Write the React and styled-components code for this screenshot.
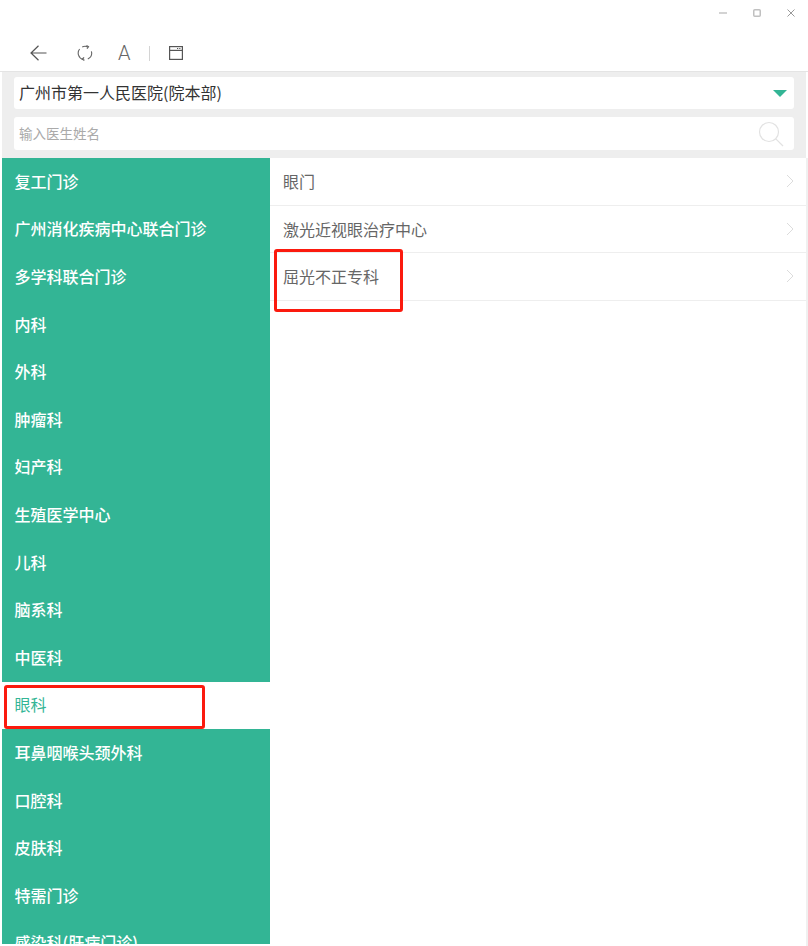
import React from 'react';
import styled, { createGlobalStyle } from 'styled-components';

const GlobalStyle = createGlobalStyle`
  html, body {
    margin: 0;
    padding: 0;
    background: #fff;
    font-family: "Noto Sans CJK SC", "Noto Sans", sans-serif;
  }
  * { box-sizing: border-box; }
`;

const Page = styled.div`
  width: 808px;
  height: 946px;
  overflow: hidden;
  position: relative;
  background: #fff;
`;

const TitleBar = styled.div`
  height: 72px;
  border-bottom: 1px solid #e4e4e4;
  display: flex;
  flex-direction: column;
`;

const WindowControls = styled.div`
  height: 26px;
  display: flex;
  justify-content: flex-end;
  align-items: center;
  gap: 26px;
  padding-right: 13px;
`;

const Toolbar = styled.div`
  display: flex;
  align-items: center;
  height: 28px;
  margin-top: 13px;
  padding-left: 30px;
`;

const ToolIcon = styled.svg`
  display: block;
  flex: none;
  margin-right: ${(p) => p.$gap}px;
`;

const ToolLetter = styled.span`
  font-family: "Roboto", sans-serif;
  font-weight: 300;
  font-size: 20px;
  line-height: 28px;
  color: #666;
  width: 13px;
  margin-right: 18px;
`;

const ToolDivider = styled.span`
  width: 1px;
  height: 15px;
  background: #d4d4d4;
  margin-right: 19px;
`;

const SearchPanel = styled.div`
  height: 86px;
  margin: 0 2px;
  background: #eee;
  padding: 5px 12px 0;
  display: flex;
  flex-direction: column;
  gap: 8px;
`;

const HospitalSelect = styled.div`
  height: 32px;
  background: #fff;
  border-radius: 3px;
  display: flex;
  align-items: center;
  justify-content: space-between;
  padding: 0 7px 2px 5px;
  font-size: 16px;
  color: #333;
`;

const Caret = styled.span`
  width: 0;
  height: 0;
  margin-top: 2px;
  border-left: 7px solid transparent;
  border-right: 7px solid transparent;
  border-top: 7px solid #33b595;
`;

const DoctorSearch = styled.div`
  height: 33px;
  background: #fff;
  border-radius: 3px;
  display: flex;
  align-items: center;
  justify-content: space-between;
  padding: 0 10px 0 5px;
  font-size: 13.5px;
  color: #aaa;
`;

const PlaceholderText = styled.span`
  margin-top: -2px;
`;

const Columns = styled.div`
  display: flex;
  margin: 0 2px;
  height: 786px;
  overflow: hidden;
`;

const Sidebar = styled.ul`
  width: 268px;
  margin: 0;
  padding: 0;
  list-style: none;
  flex: none;
`;

const SideItem = styled.li`
  height: 47.6px;
  padding: 0 0 2px 12.5px;
  display: flex;
  align-items: center;
  font-size: 16px;
  font-weight: ${(p) => (p.$active ? 400 : 500)};
  color: ${(p) => (p.$active ? '#33b595' : '#fff')};
  background: ${(p) => (p.$active ? '#fff' : '#33b595')};
`;

const SubList = styled.ul`
  flex: 1;
  margin: 0;
  padding: 0;
  list-style: none;
`;

const SubItem = styled.li`
  height: 47.6px;
  padding: 0 12px 0 13px;
  display: flex;
  align-items: center;
  justify-content: space-between;
  border-bottom: 1px solid #eee;
  font-size: 16px;
  color: #666;
`;

const EdgeLine = styled.div`
  position: absolute;
  top: 158px;
  right: 0;
  bottom: 0;
  width: 2px;
  background: #f0f0f0;
`;

// red annotation rectangles sit on top of the screenshot content
const Annotation = styled.div`
  position: absolute;
  left: ${(p) => p.$x}px;
  top: ${(p) => p.$y}px;
  width: ${(p) => p.$w}px;
  height: ${(p) => p.$h}px;
  border: 3px solid #fb1a0e;
  border-radius: 3px;
`;

const departments = [
  '复工门诊', '广州消化疾病中心联合门诊', '多学科联合门诊', '内科', '外科', '肿瘤科',
  '妇产科', '生殖医学中心', '儿科', '脑系科', '中医科', '眼科',
  '耳鼻咽喉头颈外科', '口腔科', '皮肤科', '特需门诊', '感染科(肝病门诊)',
];

const clinics = ['眼门', '激光近视眼治疗中心', '屈光不正专科'];

const Chevron = () => (
  <svg width="8" height="14" viewBox="0 0 8 14" fill="none" stroke="#dcdcdc" strokeWidth="1">
    <path d="M1 1l6 6-6 6" />
  </svg>
);

const App = () => (
  <Page>
    <GlobalStyle />
    <TitleBar>
      <WindowControls>
        <svg width="8" height="8" viewBox="0 0 8 8"><path d="M0 4h8" stroke="#c4c4c4" strokeWidth="1.5" /></svg>
        <svg width="8" height="8" viewBox="0 0 8 8"><rect x=".75" y=".75" width="6.5" height="6.5" rx="1" fill="none" stroke="#c0c0c0" strokeWidth="1.5" /></svg>
        <svg width="8" height="8" viewBox="0 0 8 8"><path d="M.5.5l7 7M7.5.5l-7 7" stroke="#999" strokeWidth="1" /></svg>
      </WindowControls>
      <Toolbar>
        <ToolIcon $gap={30} width="17" height="16" viewBox="0 0 17 16" fill="none" stroke="#555" strokeWidth="1.2">
          <path d="M16.5 8H1M8.5 .8L1 8l7.5 7.2" />
        </ToolIcon>
        <ToolIcon $gap={25} width="16" height="16" viewBox="0 0 16 16" fill="none" stroke="#666" strokeWidth="1.1">
          <path d="M5.2 2A6.6 6.6 0 0 1 10 1.6M14.4 6.4A6.6 6.6 0 0 1 10.8 14M6 14.4A6.6 6.6 0 0 1 2.6 4" />
          <path d="M9.4 .6L11.4 1.8 10 3.6M7.4 15.4L5.4 14.2 7 12.4" strokeWidth="1.3" />
        </ToolIcon>
        <ToolLetter>A</ToolLetter>
        <ToolDivider />
        <ToolIcon $gap={0} width="14" height="14" viewBox="0 0 14 14" fill="none" stroke="#555" strokeWidth="1.2">
          <rect x=".6" y=".6" width="12.8" height="12.8" />
          <path d="M.6 4.4h12.8" />
          <path d="M8 2.5h4" strokeDasharray="1 .8" />
        </ToolIcon>
      </Toolbar>
    </TitleBar>
    <SearchPanel>
      <HospitalSelect>
        广州市第一人民医院(院本部)
        <Caret />
      </HospitalSelect>
      <DoctorSearch>
        <PlaceholderText>输入医生姓名</PlaceholderText>
        <svg width="26" height="26" viewBox="0 0 26 26" fill="none" stroke="#e2e2e2" strokeWidth="1.2">
          <circle cx="11" cy="11" r="9.5" />
          <path d="M17.8 17.8L25 25" />
        </svg>
      </DoctorSearch>
    </SearchPanel>
    <Columns>
      <Sidebar>
        {departments.map((name) => (
          <SideItem key={name} $active={name === '眼科'}>{name}</SideItem>
        ))}
      </Sidebar>
      <SubList>
        {clinics.map((name) => (
          <SubItem key={name}>
            {name}
            <Chevron />
          </SubItem>
        ))}
      </SubList>
    </Columns>
    <EdgeLine />
    <Annotation $x={4} $y={685} $w={201} $h={44} />
    <Annotation $x={274} $y={249} $w={129} $h={63} />
  </Page>
);

export default App;
